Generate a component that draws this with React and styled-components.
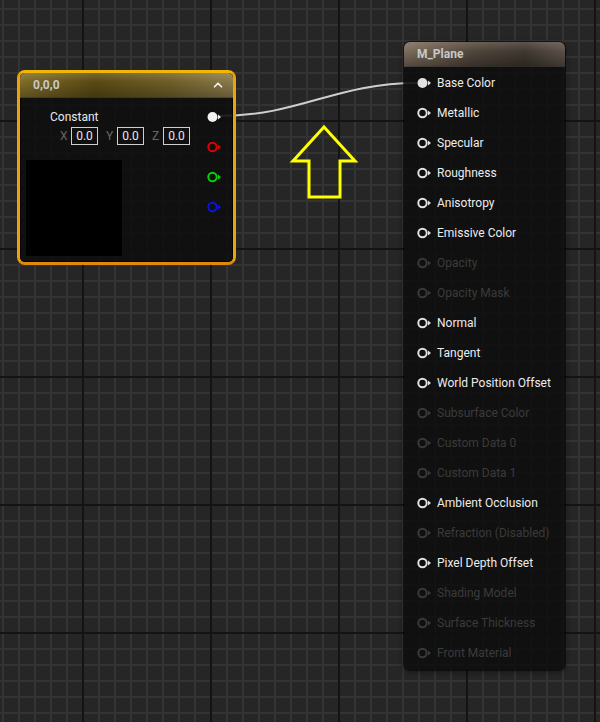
import React from 'react';
import styled, { createGlobalStyle } from 'styled-components';
import { ChevronUp } from 'lucide-react';

const GlobalStyle = createGlobalStyle`
  html, body { margin: 0; padding: 0; background: #262626; }
  body { font-family: Roboto, "Noto Sans", sans-serif; }
`;

const Canvas = styled.div`
  position: relative;
  width: 600px;
  height: 722px;
  overflow: hidden;
  background-color: #262626;
  background-image:
    repeating-linear-gradient(to right, transparent 0 82px, #141414 82px 84px, transparent 84px 128px),
    repeating-linear-gradient(to bottom, transparent 0 120px, #141414 120px 122px, transparent 122px 128px),
    repeating-linear-gradient(to right, transparent 0 2px, #333333 2px 4px, transparent 4px 16px),
    repeating-linear-gradient(to bottom, transparent 0 8px, #333333 8px 10px, transparent 10px 16px);
`;

const Overlay = styled.svg`
  position: absolute;
  left: 0;
  top: 0;
  width: 600px;
  height: 722px;
  pointer-events: none;
  z-index: ${(p) => p.$z};
`;

/* ---- constant node ---- */

const SelectedFrame = styled.div`
  position: absolute;
  left: ${(p) => p.$x}px;
  top: ${(p) => p.$y}px;
  width: 213px;
  border: 3px solid #eda20c;
  border-top-color: #f2b604;
  border-bottom-color: #e0880e;
  border-radius: 8px;
  z-index: 2;
`;

const Node = styled.div`
  display: flex;
  flex-direction: column;
  background: rgba(14, 14, 14, 0.9);
  border-radius: 5px;
  overflow: hidden;
  box-shadow: inset 0 0 0 1px rgba(0, 0, 0, 0.7);
`;

const Header = styled.div`
  display: flex;
  align-items: center;
  justify-content: space-between;
  height: 24px;
  padding: 0 8px 0 13px;
  font-size: 12px;
  font-weight: 700;
  color: #c8c8c8;
  background: ${(p) => p.$tint};
  border-bottom: 1px solid rgba(0, 0, 0, 0.5);
`;

const goldTint = `
  linear-gradient(to bottom, rgba(255,240,180,0.18) 0, rgba(0,0,0,0) 35%, rgba(0,0,0,0.25) 100%),
  linear-gradient(to right, #7e6c28 0, #5a4a14 35%, #6e5e28 70%, #8a7a4a 100%)
`;

const plateTint = `
  linear-gradient(to bottom, rgba(255,240,220,0.16) 0, rgba(0,0,0,0) 40%, rgba(0,0,0,0.3) 100%),
  linear-gradient(to right, #7a6c5c 0, #4e443a 45%, #3e3730 75%, #5a5048 100%)
`;

const ConstBody = styled.div`
  display: flex;
  padding: 9px 10px 6px 6px;
`;

const ConstColumn = styled.div`
  flex: 1;
  display: flex;
  flex-direction: column;
`;

const ConstLabel = styled.div`
  margin-left: 24px;
  height: 20px;
  line-height: 20px;
  font-size: 12px;
  color: #e8e8e8;
`;

const VectorRow = styled.div`
  display: flex;
  align-items: center;
  gap: 8px;
  margin-left: 34px;
  height: 18px;
`;

const Field = styled.div`
  display: flex;
  align-items: center;
  gap: 3px;
`;

const Axis = styled.span`
  width: 8px;
  font-size: 12px;
  color: #666666;
`;

const ValueBox = styled.span`
  box-sizing: border-box;
  width: 27px;
  height: 18px;
  border: 1px solid #cfcfcf;
  font-size: 12px;
  line-height: 16px;
  text-align: center;
  color: #e8e8e8;
`;

const Preview = styled.div`
  margin-top: 15px;
  width: 96px;
  height: 96px;
  background: #000000;
`;

const PinColumn = styled.div`
  display: flex;
  flex-direction: column;
  gap: 10px;
`;

const PinSlot = styled.div`
  display: flex;
  align-items: center;
  height: 20px;
`;

/* ---- material node ---- */

const MaterialNode = styled(Node)`
  position: absolute;
  left: ${(p) => p.$x}px;
  top: ${(p) => p.$y}px;
  width: 161px;
  height: 628px;
  border-radius: 6px;
  box-shadow: 0 0 0 1px rgba(0, 0, 0, 0.55), 0 2px 6px rgba(0, 0, 0, 0.4);
  z-index: 2;
`;

const InputList = styled.div`
  display: flex;
  flex-direction: column;
  padding-top: 1px;
`;

const InputRow = styled.div`
  display: flex;
  align-items: center;
  gap: 4px;
  height: 30px;
  padding-left: 13px;
  font-size: 12px;
  color: ${(p) => (p.$off ? '#3b3b3b' : '#ececec')};
`;

function Pin({ color = '#e2e2e2', filled = false }) {
  return (
    <svg width="16" height="12" viewBox="0 0 16 12">
      {filled ? (
        <circle cx="5.5" cy="6" r="5" fill={color} />
      ) : (
        <circle cx="5.5" cy="6" r="4.2" fill="none" stroke={color} strokeWidth="2" />
      )}
      <polygon points="11,3.6 14,6 11,8.4" fill={color} />
    </svg>
  );
}

const inputs = [
  ['Base Color', false, true],
  ['Metallic'],
  ['Specular'],
  ['Roughness'],
  ['Anisotropy'],
  ['Emissive Color'],
  ['Opacity', true],
  ['Opacity Mask', true],
  ['Normal'],
  ['Tangent'],
  ['World Position Offset'],
  ['Subsurface Color', true],
  ['Custom Data 0', true],
  ['Custom Data 1', true],
  ['Ambient Occlusion'],
  ['Refraction (Disabled)', true],
  ['Pixel Depth Offset'],
  ['Shading Model', true],
  ['Surface Thickness', true],
  ['Front Material', true],
];

export default function App() {
  return (
    <>
      <GlobalStyle />
      <Canvas>
        <Overlay $z={1}>
          <path d="M219 116 C 300 116, 335 83, 417 83" fill="none" stroke="#cfcfcf" strokeWidth="2" />
        </Overlay>

        <SelectedFrame $x={17} $y={70}>
          <Node>
            <Header $tint={goldTint}>
              <span>0,0,0</span>
              <ChevronUp size={14} strokeWidth={3} color="#f0f0f0" />
            </Header>
            <ConstBody>
              <ConstColumn>
                <ConstLabel>Constant</ConstLabel>
                <VectorRow>
                  {['X', 'Y', 'Z'].map((a) => (
                    <Field key={a}>
                      <Axis>{a}</Axis>
                      <ValueBox>0.0</ValueBox>
                    </Field>
                  ))}
                </VectorRow>
                <Preview />
              </ConstColumn>
              <PinColumn>
                <PinSlot><Pin color="#f2f2f2" filled /></PinSlot>
                <PinSlot><Pin color="#e00000" /></PinSlot>
                <PinSlot><Pin color="#00d400" /></PinSlot>
                <PinSlot><Pin color="#0a14e6" /></PinSlot>
              </PinColumn>
            </ConstBody>
          </Node>
        </SelectedFrame>

        <MaterialNode $x={404} $y={42}>
          <Header $tint={plateTint}>M_Plane</Header>
          <InputList>
            {inputs.map(([name, off, filled]) => (
              <InputRow key={name} $off={off}>
                <Pin color={off ? '#3a3a3a' : '#e2e2e2'} filled={filled} />
                {name}
              </InputRow>
            ))}
          </InputList>
        </MaterialNode>

        <Overlay $z={3}>
          <polygon
            points="324,127 355,161 340,161 340,197 309,197 309,161 293,161"
            fill="none"
            stroke="#ffff00"
            strokeWidth="3"
            strokeLinejoin="miter"
          />
        </Overlay>
      </Canvas>
    </>
  );
}
